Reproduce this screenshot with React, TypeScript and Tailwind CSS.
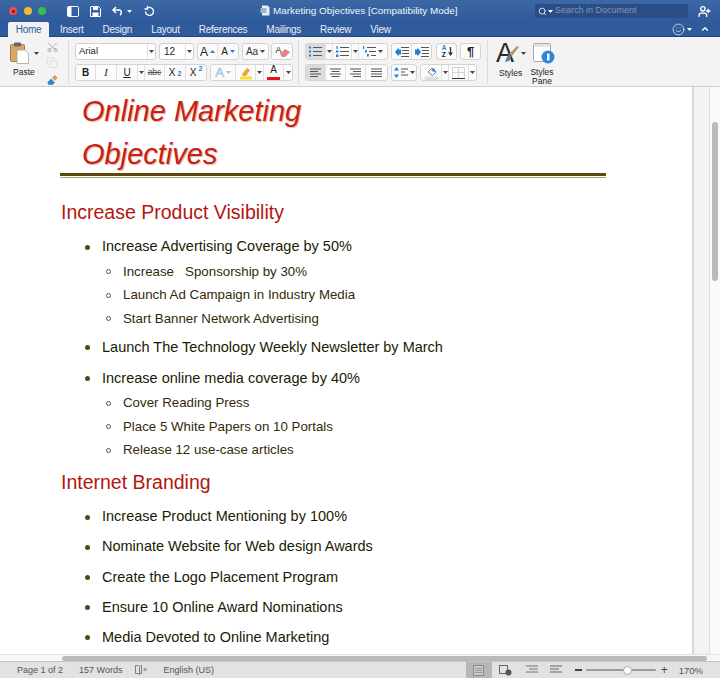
import type { ReactNode } from "react";
import { ChevronUp, Copy, Scissors, Search, Smile, UserPlus } from "lucide-react";

const sans = "font-['Liberation_Sans',Arial,sans-serif]";

const tabs = ["Insert", "Design", "Layout", "References", "Mailings", "Review", "View"];

const rows = [
  { text: "Increase Product Visibility", kind: "h", cls: "mt-5" },
  { text: "Increase Advertising Coverage by 50%", kind: "a", cls: "mt-[9px]" },
  { text: "Increase   Sponsorship by 30%", kind: "b", cls: "mt-px" },
  { text: "Launch Ad Campaign in Industry Media", kind: "b", cls: "" },
  { text: "Start Banner Network Advertising", kind: "b", cls: "" },
  { text: "Launch The Technology Weekly Newsletter by March", kind: "a", cls: "mt-[5px]" },
  { text: "Increase online media coverage by 40%", kind: "a", cls: "mt-[7px]" },
  { text: "Cover Reading Press", kind: "b", cls: "mt-px" },
  { text: "Place 5 White Papers on 10 Portals", kind: "b", cls: "" },
  { text: "Release 12 use-case articles", kind: "b", cls: "" },
  { text: "Internet Branding", kind: "h", cls: "mt-[6px]" },
  { text: "Increase Product Mentioning by 100%", kind: "a", cls: "mt-[9px]" },
  { text: "Nominate Website for Web design Awards", kind: "a", cls: "mt-[6px]" },
  { text: "Create the Logo Placement Program", kind: "a", cls: "mt-[6.5px]" },
  { text: "Ensure 10 Online Award Nominations", kind: "a", cls: "mt-[6px]" },
  { text: "Media Devoted to Online Marketing", kind: "a", cls: "mt-[6px]" },
];

function Caret({ className = "text-[#444]" }: { className?: string }) {
  return (
    <svg width="5" height="3" viewBox="0 0 5 3" className={className}>
      <path d="M0 0h5L2.5 3z" fill="currentColor" />
    </svg>
  );
}

function Group({ children }: { children: ReactNode }) {
  return (
    <div className="flex h-[17px] rounded-[3px] border border-[#d4d4d4] bg-[#fbfbfb] divide-x divide-[#e0e0e0] overflow-hidden">
      {children}
    </div>
  );
}

function Cell({ className, children }: { className: string; children: ReactNode }) {
  return <div className={`flex items-center justify-center gap-[2px] ${className}`}>{children}</div>;
}

function Lines({ n = 3, w = 10, color = "#555", align = "left" }: { n?: number; w?: number; color?: string; align?: string }) {
  const gap = n === 4 ? 2.5 : 3;
  return (
    <svg width={w} height="10" viewBox={`0 0 ${w} 10`}>
      {Array.from({ length: n }).map((_, i) => {
        const short = align !== "justify" && i % 2 === 1;
        const len = short ? w - 3 : w;
        const x = align === "center" ? (w - len) / 2 : align === "right" ? w - len : 0;
        return <rect key={i} x={x} y={0.5 + i * gap} width={len} height="1" fill={color} />;
      })}
    </svg>
  );
}

function ListIcon({ kind }: { kind: "dot" | "num" | "multi" }) {
  return (
    <svg width="13" height="11" viewBox="0 0 13 11">
      {kind === "dot" && (
        <g fill="#1f7fd6">
          <rect x="0" y="0.5" width="2" height="2" />
          <rect x="0" y="4.5" width="2" height="2" />
          <rect x="0" y="8.5" width="2" height="2" />
        </g>
      )}
      {kind === "num" && (
        <g fill="#1f7fd6">
          <rect x="0.5" y="0" width="1.2" height="3" />
          <rect x="0" y="4.5" width="2.4" height="2" />
          <rect x="0" y="8.5" width="2.4" height="2.5" />
        </g>
      )}
      {kind === "multi" && (
        <g fill="#1f7fd6">
          <rect x="0" y="0" width="1.2" height="3" />
          <rect x="2" y="4" width="1.8" height="2.5" />
          <rect x="4" y="8" width="1.8" height="2.5" />
        </g>
      )}
      <g fill="#555">
        <rect x="4" y="1" width="9" height="1" />
        <rect x={kind === "multi" ? 6 : 4} y="5" width={kind === "multi" ? 7 : 9} height="1" />
        <rect x={kind === "multi" ? 8 : 4} y="9" width={kind === "multi" ? 5 : 9} height="1" />
      </g>
    </svg>
  );
}

function IndentIcon({ flip }: { flip?: boolean }) {
  return (
    <svg width="14" height="10" viewBox="0 0 14 10">
      <path d={flip ? "M0 2.5h2.5V0.5L6 5 2.5 9.500V7.500H0z" : "M6 2.500H3.500V0.500L0 5l3.500 4.500V7.500H6z"} fill="#1f7fd6" />
      <g fill="#555">
        <rect x="6" y="0" width="8" height="1" />
        <rect x="7" y="3" width="7" height="1" />
        <rect x="7" y="6" width="7" height="1" />
        <rect x="6" y="9" width="8" height="1" />
      </g>
    </svg>
  );
}

function Ribbon() {
  return (
    <div className={`flex h-[50px] bg-[#f3f3f3] border-b border-[#cfcfcf] ${sans} text-[#222]`}>
      {/* clipboard */}
      <div className="w-[46px] pl-[10px] pt-[5px] flex flex-col">
        <div className="flex items-center gap-[5px]">
          <svg width="19" height="22" viewBox="0 0 19 22">
            <rect x="0.500" y="2.500" width="14" height="17" rx="1" fill="#d9a866" stroke="#a87d45" />
            <rect x="4" y="0.500" width="7" height="4" rx="1" fill="#666" />
            <path d="M7 8h8l3.500 3.500V21.500H7z" fill="#fff" stroke="#999" strokeWidth="0.700" />
          </svg>
          <Caret />
        </div>
        <span className="text-[8.500px] leading-none mt-[4px] ml-[3px]">Paste</span>
      </div>
      <div className="w-[22px] pt-[4px] flex flex-col items-start gap-[4px]">
        <Scissors size={13} strokeWidth={1.300} className="text-[#7d93a8] -rotate-90" />
        <Copy size={12} strokeWidth={1.100} className="text-[#cfcfcf]" />
        <svg width="13" height="13" viewBox="0 0 13 13" className="mt-px">
          <path d="M1 9l4-4 4 4-3 3-2-1-1.500 1z" fill="#3f7fc4" />
          <path d="M6 4l3-3 3 3-3 3z" fill="#c9a45c" />
        </svg>
      </div>
      <div className="w-px h-[44px] mt-[3px] bg-[#dcdcdc]" />

      {/* font */}
      <div className="ml-[6px] pt-[6px] flex flex-col gap-[4px]">
        <div className="flex gap-[3px]">
          <div className="w-[81px] h-[17px] flex items-center rounded-[3px] border border-[#d0d0d0] bg-white text-[9.500px]">
            <span className="flex-1 pl-[3px]">Arial</span>
            <span className="w-[8px] h-full flex items-center justify-center border-l border-[#e0e0e0]"><Caret /></span>
          </div>
          <div className="w-[35px] h-[17px] flex items-center rounded-[3px] border border-[#d0d0d0] bg-white text-[10px]">
            <span className="flex-1 pl-[4px]">12</span>
            <span className="w-[8px] h-full flex items-center justify-center border-l border-[#e0e0e0]"><Caret /></span>
          </div>
          <Group>
            <Cell className="w-[20px]">
              <span className="text-[12px] leading-none">A</span>
              <svg width="5" height="3" viewBox="0 0 5 3"><path d="M0 3h5L2.500 0z" fill="#2f7fd0" /></svg>
            </Cell>
            <Cell className="w-[20px]">
              <span className="text-[10px] leading-none">A</span>
              <Caret className="text-[#2f7fd0]" />
            </Cell>
          </Group>
          <Group>
            <Cell className="w-[25px]">
              <span className="text-[10px] leading-none text-[#333]">Aa</span>
              <Caret />
            </Cell>
          </Group>
          <div className="-ml-px">
            <Group>
              <Cell className="w-[20px] relative">
                <span className="text-[9px] leading-none -mt-[3px] -ml-[7px]">A</span>
                <svg width="12" height="10" viewBox="0 0 12 10" className="absolute left-[7px] top-[4px]">
                  <path d="M1 6l5-5 5 3-5 5H3z" fill="#e0848c" />
                </svg>
              </Cell>
            </Group>
          </div>
        </div>
        <div className="flex gap-[3px]">
          <Group>
            <Cell className="w-[20px] font-bold text-[10px]">B</Cell>
            <Cell className="w-[21px] italic text-[10.500px] font-['Liberation_Serif',serif]">I</Cell>
            <Cell className="w-[21px] underline text-[10px]">U</Cell>
            <Cell className="w-[7px]"><Caret /></Cell>
            <Cell className="w-[20px] line-through text-[8.500px] text-[#555]">abc</Cell>
            <Cell className="w-[21px] text-[10px] gap-0">X<sub className="text-[7px] text-[#2f7fd0] font-bold">2</sub></Cell>
            <Cell className="w-[20px] text-[10px] gap-0">X<sup className="text-[7px] text-[#2f7fd0] font-bold">2</sup></Cell>
          </Group>
          <Group>
            <Cell className="w-[25px] text-[13px] text-white [-webkit-text-stroke:0.7px_#a3c3e2]">
              A<Caret className="text-[#bbb]" />
            </Cell>
            <Cell className="w-[20px]">
              <svg width="14" height="14" viewBox="0 0 14 14">
                <path d="M3 8l5-6 3 2-4 6H4z" fill="#e6a23c" />
                <rect x="1" y="10.500" width="12" height="3" fill="#f4e22c" />
              </svg>
            </Cell>
            <Cell className="w-[8px]"><Caret /></Cell>
            <Cell className="w-[20px] flex-col gap-0 text-[10px] leading-[10px]">
              A
              <span className="w-[13px] h-[3px] bg-[#e8101c]" />
            </Cell>
            <Cell className="w-[8px]"><Caret /></Cell>
          </Group>
        </div>
      </div>
      <div className="w-px h-[44px] mt-[3px] ml-[5px] bg-[#dcdcdc]" />

      {/* paragraph */}
      <div className="ml-[6px] pt-[6px] flex flex-col gap-[4px]">
        <div className="flex gap-[3px]">
          <Group>
            <Cell className="w-[20px] bg-[#dcdcdc]"><ListIcon kind="dot" /></Cell>
            <Cell className="w-[7px]"><Caret /></Cell>
            <Cell className="w-[19px]"><ListIcon kind="num" /></Cell>
            <Cell className="w-[7px]"><Caret /></Cell>
            <Cell className="w-[28px]"><ListIcon kind="multi" /><Caret /></Cell>
          </Group>
          <Group>
            <Cell className="w-[20px]"><IndentIcon /></Cell>
            <Cell className="w-[19px]"><IndentIcon flip /></Cell>
          </Group>
          <div className="ml-px">
            <Group>
              <Cell className="w-[19px] flex-col-reverse relative">
                <span className="flex flex-col text-[6.500px] leading-[6.500px] font-bold -ml-[5px]">
                  <span className="text-[#2f7fd0]">A</span>
                  <span>Z</span>
                </span>
                <svg width="5" height="9" viewBox="0 0 5 9" className="absolute right-[3px] top-[3px]">
                  <path d="M1.800 0h1.400v5.500H5L2.500 9 0 5.500h1.800z" fill="#333" />
                </svg>
              </Cell>
            </Group>
          </div>
          <Group>
            <Cell className="w-[19px] font-bold text-[13px]">¶</Cell>
          </Group>
        </div>
        <div className="flex gap-[3px]">
          <Group>
            <Cell className="w-[20px] bg-[#dcdcdc]"><Lines n={4} w={11} /></Cell>
            <Cell className="w-[20px]"><Lines n={4} w={11} align="center" /></Cell>
            <Cell className="w-[20px]"><Lines n={4} w={11} align="right" /></Cell>
            <Cell className="w-[21px]"><Lines n={4} w={11} align="justify" /></Cell>
          </Group>
          <Group>
            <Cell className="w-[24px]">
              <svg width="5" height="11" viewBox="0 0 5 11">
                <path d="M2.500 0L5 3.500H0zM2.500 11L0 7.500h5z" fill="#1f7fd6" />
              </svg>
              <Lines w={7} />
              <Caret />
            </Cell>
          </Group>
          <Group>
            <Cell className="w-[21px]">
              <svg width="15" height="14" viewBox="0 0 15 14">
                <path d="M4 6l4-4 4 4-3.500 3.500z" fill="#fff" stroke="#777" />
                <path d="M7 5l3-3 2 4z" fill="#2f7fd0" />
                <rect x="1" y="11" width="13" height="2.500" fill="#e4e4e4" stroke="#ccc" strokeWidth="0.500" />
              </svg>
            </Cell>
            <Cell className="w-[7px]"><Caret /></Cell>
            <Cell className="w-[20px]">
              <svg width="13" height="12" viewBox="0 0 13 12">
                <path d="M0.500 0.500h12v10M0.500 0.500v10M6.500 0.500v10M0.500 5.500h12" fill="none" stroke="#d4d4d4" />
                <rect x="0" y="11" width="13" height="1" fill="#333" />
              </svg>
            </Cell>
            <Cell className="w-[7px]"><Caret /></Cell>
          </Group>
        </div>
      </div>
      <div className="w-px h-[44px] mt-[3px] ml-[6px] bg-[#dcdcdc]" />

      {/* styles */}
      <div className="ml-[8px] w-[31px] pt-[3px] flex flex-col items-start">
        <div className="relative h-[28px] w-full flex">
          <span className="text-[27px] leading-[27px] text-[#2a2a2a]">A</span>
          <svg width="14" height="17" viewBox="0 0 14 17" className="absolute left-[9px] top-[6px]">
            <path d="M12 0l2 1-7 9-3-2z" fill="#b99a62" />
            <path d="M3.500 8.500l3 2L4 15l-4 1 1.500-4z" fill="#5a7ea8" />
          </svg>
          <span className="absolute left-[25px] top-[12px]"><Caret /></span>
        </div>
        <span className="text-[8.500px] leading-none mt-px ml-[3px]">Styles</span>
      </div>
      <div className="w-[30px] pt-[6px] flex flex-col items-center">
        <svg width="22" height="21" viewBox="0 0 22 21" className="ml-[4px]">
          <rect x="0.500" y="0.500" width="17" height="18" rx="1.500" fill="#fff" stroke="#aaa" />
          <rect x="1" y="1" width="16" height="3" fill="#e4e4e4" />
          <circle cx="15" cy="14" r="6.500" fill="#2f86d8" />
          <rect x="14" y="10.500" width="2.500" height="7" rx="1" fill="#fff" />
        </svg>
        <span className="text-[8.500px] leading-[8.500px] mt-[4px] text-center">Styles Pane</span>
      </div>
    </div>
  );
}

function DocRow({ text, kind, cls }: { text: string; kind: string; cls: string }) {
  if (kind === "h") {
    return <div className={`h-[28px] leading-[28px] pl-[61px] text-[19.500px] text-[#b2160f] ${cls}`}>{text}</div>;
  }
  if (kind === "a") {
    return (
      <div className={`h-[24px] flex items-center pl-[85px] text-[14.500px] text-[#211a04] ${cls}`}>
        <span className="w-[5px] h-[5px] rounded-full bg-[#4d4a1e] mr-[12px] shrink-0" />
        {text}
      </div>
    );
  }
  return (
    <div className={`h-[23.500px] flex items-center pl-[106px] text-[13.300px] text-[#332a08] whitespace-pre ${cls}`}>
      <span className="w-[5px] h-[5px] rounded-full border border-[#5a5a30] mr-[12px] shrink-0" />
      {text}
    </div>
  );
}

export default function App() {
  return (
    <div className={`w-[720px] h-[678px] flex flex-col overflow-hidden bg-white ${sans}`}>
      {/* title bar */}
      <div className="h-[22px] flex items-center bg-linear-to-b from-[#3d68a6] to-[#2f5a9b] text-white relative">
        <div className="flex gap-[6.500px] pl-[9px]">
          <span className="w-[8px] h-[8px] rounded-full bg-[#ee5048] flex items-center justify-center">
            <span className="w-[3px] h-[3px] rounded-full bg-[#7d1210]" />
          </span>
          <span className="w-[8px] h-[8px] rounded-full bg-[#f2b632]" />
          <span className="w-[8px] h-[8px] rounded-full bg-[#35c04a]" />
        </div>
        <div className="flex items-center ml-[21px]">
          <svg width="12" height="11" viewBox="0 0 12 11" className="text-white">
            <rect x="0.500" y="0.500" width="11" height="10" rx="1" fill="none" stroke="currentColor" />
            <rect x="1" y="1" width="3.500" height="9" fill="currentColor" />
          </svg>
          <svg width="11" height="11" viewBox="0 0 11 11" className="ml-[11px]">
            <path d="M1 .5h7.500L10.500 2.500V10.500H.5V1z" fill="none" stroke="#fff" />
            <rect x="3" y="1" width="5" height="3" fill="#fff" />
            <rect x="2.500" y="6.500" width="6" height="4" fill="#fff" />
          </svg>
          <svg width="12" height="10" viewBox="0 0 12 10" className="ml-[11px]">
            <path d="M4 1L1 4l3 3M1.500 4H8a3 3 0 0 1 0 5" fill="none" stroke="#fff" strokeWidth="1.500" />
          </svg>
          <span className="ml-[3px]"><Caret className="text-white" /></span>
          <svg width="11" height="11" viewBox="0 0 11 11" className="ml-[12px]">
            <path d="M3 2.300A4 4 0 1 1 1.500 5.500M3.500 0v3H0.500" fill="none" stroke="#fff" strokeWidth="1.300" />
          </svg>
        </div>
        <div className="flex items-center ml-[105px] text-[9.900px] text-[#f2f5fa] whitespace-nowrap">
          <svg width="10" height="11" viewBox="0 0 10 11" className="mr-[3px]">
            <path d="M2 .5h5.500L9.500 2.500v8H2z" fill="#e8edf5" />
            <rect x="0.500" y="3" width="6" height="5" fill="#9fb4d3" />
          </svg>
          Marketing Objectives [Compatibility Mode]
        </div>
        <div className="ml-auto flex items-center">
          <div className="w-[153px] h-[14px] flex items-center pl-[3px] rounded-[2px] bg-[#2b4d85] text-[9px] text-[#7f98bf]">
            <Search size={9} strokeWidth={2} className="text-white" />
            <Caret className="text-white ml-px" />
            <span className="ml-[2px]">Search in Document</span>
          </div>
          <UserPlus size={13} strokeWidth={2.500} className="text-white ml-[10px] mr-[9px]" />
        </div>
      </div>

      {/* tabs */}
      <div className="h-[15px] flex items-stretch bg-[#2f5a9b] border-b border-[#1f4583] text-[#e9eef6] text-[10px] tracking-[-0.25px] relative">
        <div className="ml-[8px] w-[41px] h-[15px] flex items-center justify-center bg-[#f3f3f3] rounded-t-[2px] text-[#2f5a9e]">Home</div>
        <div className="flex items-center gap-[19px] ml-[11px]">
          {tabs.map((t) => (
            <span key={t}>{t}</span>
          ))}
        </div>
        <div className="ml-auto flex items-center pr-[10px]">
          <Smile size={13} strokeWidth={1.300} className="text-white" />
          <Caret className="text-white ml-[2px] mr-[8px]" />
          <ChevronUp size={10} strokeWidth={3} className="text-white" />
        </div>
      </div>

      <Ribbon />

      {/* document */}
      <div className="flex-1 min-h-0 flex">
        <div className="w-[692px] overflow-hidden pt-[2px]">
          <div className="pl-[82px] text-[29px] leading-[44px] italic text-[#c8210f] [text-shadow:1px_1px_1px_#e3b0a8]">
            <div>Online Marketing</div>
            <div className="-mt-px">Objectives</div>
          </div>
          <div className="ml-[60px] w-[546px] -mt-[3px] h-[5px] border-t-[3px] border-b border-t-[#5c4a10] border-b-[#b3a574]" />
          {rows.map((r) => (
            <DocRow key={r.text} {...r} />
          ))}
        </div>
        <div className="flex-1 flex border-l-2 border-[#d8d8d8]">
          <div className="w-[16px] bg-[#f3f3f3] border-r border-[#dedede]" />
          <div className="flex-1 pt-[35px] pl-[2px] bg-[#fafafa]">
            <div className="w-[6px] h-[159px] rounded-full bg-[#bababa]" />
          </div>
        </div>
      </div>

      {/* horizontal scrollbar */}
      <div className="h-[7px] pl-[62px] pr-[13px] pt-px bg-[#f7f7f7] border-t border-[#e4e4e4]">
        <div className="h-[5px] rounded-full bg-[#b9b9b9]" />
      </div>

      {/* status bar */}
      <div className="h-[17px] flex items-center bg-[#e2e2e2] border-t border-[#c4c4c4] text-[9px] text-[#555]">
        <span className="ml-[17px] mt-[2px]">Page 1 of 2</span>
        <span className="ml-[16px] mt-[2px]">157 Words</span>
        <svg width="12" height="10" viewBox="0 0 12 10" className="ml-[13px]">
          <path d="M.5.500h3l1 1 0 8-1-1h-3zM4.500 1.500l1-1h1v8h-1l-1 1" fill="none" stroke="#666" strokeWidth="0.800" />
          <path d="M8.500 3l3 3m0-3l-3 3" stroke="#666" strokeWidth="0.800" />
        </svg>
        <span className="ml-[16px] mt-[2px]">English (US)</span>
        <div className="ml-auto flex items-center h-full">
          <div className="w-[26px] h-full bg-[#b7b7b7] flex items-center justify-center">
            <svg width="11" height="11" viewBox="0 0 11 11">
              <rect x="0.500" y="0.500" width="10" height="10" fill="#c8c8c8" stroke="#8c8c8c" />
              <path d="M2 3.500h7M2 5.500h7M2 7.500h7" stroke="#9a9a9a" />
            </svg>
          </div>
          <svg width="13" height="11" viewBox="0 0 13 11" className="ml-[7px]">
            <rect x="0.500" y="0.500" width="8" height="8" fill="none" stroke="#666" />
            <circle cx="9.500" cy="7.500" r="3" fill="#555" />
          </svg>
          <span className="ml-[14px]"><Lines w={12} n={3} color="#777" align="right" /></span>
          <span className="ml-[12px]"><Lines w={12} n={3} color="#666" /></span>
          <span className="ml-[13px] w-[7px] h-[1.500px] bg-[#444]" />
          <div className="ml-[4px] w-[70px] h-[2px] rounded-full bg-[#9a9a9a] relative">
            <span className="absolute left-[37px] -top-[3.500px] w-[9px] h-[9px] rounded-full bg-white border border-[#aaa]" />
          </div>
          <span className="ml-[5px] text-[12px] leading-none text-[#444]">+</span>
          <span className="ml-[11px] mr-[17px] mt-[2px] text-[9.500px]">170%</span>
        </div>
      </div>
    </div>
  );
}
